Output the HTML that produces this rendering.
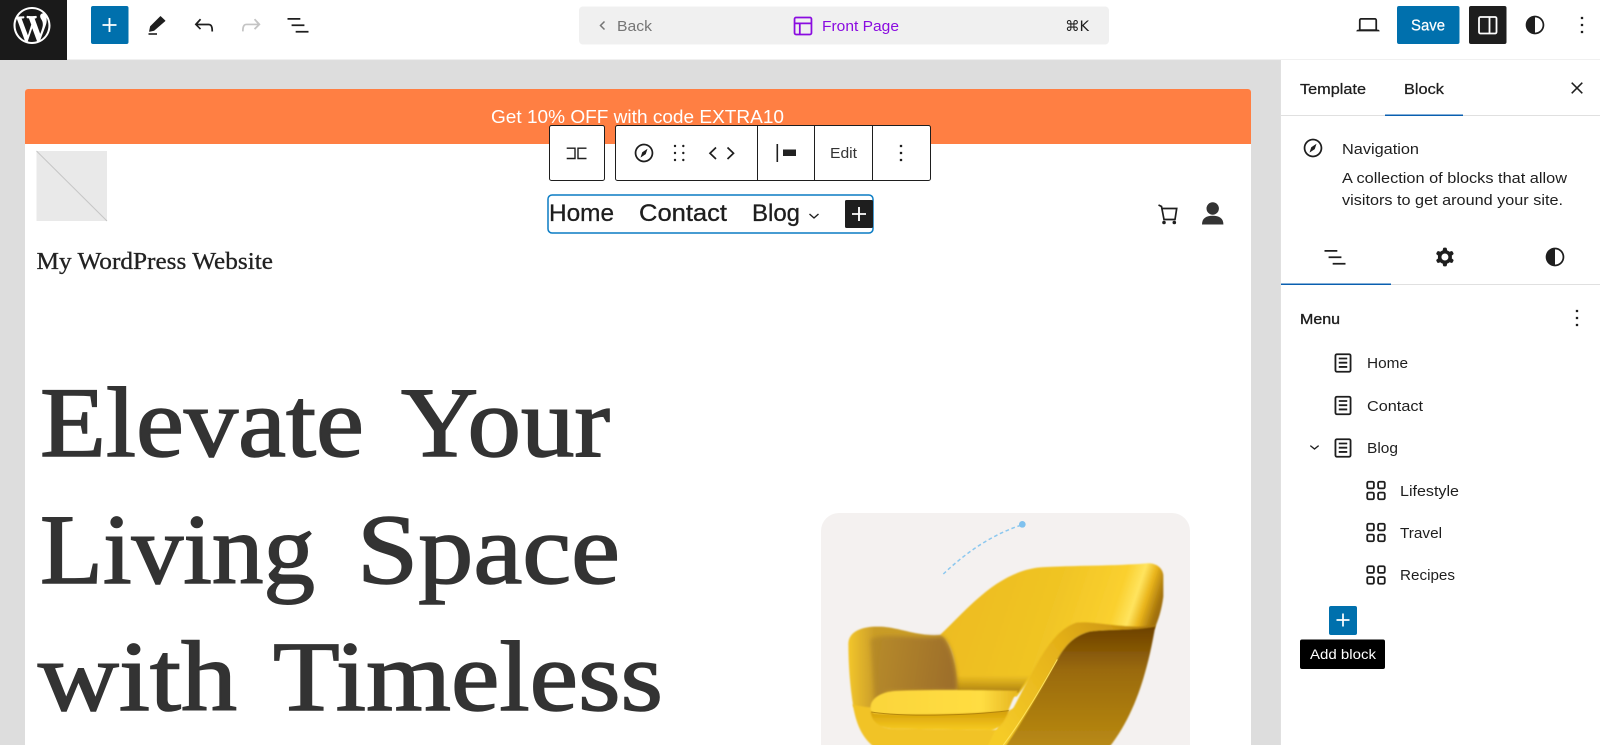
<!DOCTYPE html>
<html lang="en">
<head>
<meta charset="utf-8">
<title>Front Page</title>
<style>
html,body{margin:0;padding:0;background:#fff;width:1600px;height:745px;overflow:hidden}
svg{display:block;position:absolute;left:0;top:0}
text{font-family:"Liberation Sans",Arial,sans-serif;fill:#1e1e1e}
.ui{font-size:14.5px}
.m{stroke:#1e1e1e;stroke-width:.25px}
.serif{font-family:"Liberation Serif",serif;fill:#333}
.h{font-size:100px;stroke:#333;stroke-width:1.5px}
.d{stroke:#1e1e1e;stroke-width:.25px}
</style>
</head>
<body>
<svg width="1600" height="745" viewBox="0 0 1600 745" xmlns="http://www.w3.org/2000/svg">
<defs>
<symbol id="plus" viewBox="0 0 24 24"><path d="M18 11.2h-5.2V6h-1.6v5.2H6v1.6h5.2V18h1.6v-5.2H18z"/></symbol>
<symbol id="undo" viewBox="0 0 24 24"><path d="M18.3 11.7c-.6-.6-1.4-.9-2.3-.9H6.7l2.9-3.3-1.1-1-4.5 5L8.5 16l1-1-2.7-2.7H16c.5 0 .9.2 1.3.5 1 1 1 3.4 1 4.5v.3h1.5v-.2c0-1.5 0-4.3-1.5-5.7z"/></symbol>
<symbol id="redo" viewBox="0 0 24 24"><path d="M15.6 6.5l-1.1 1 2.9 3.3H8c-.9 0-1.7.3-2.3.9-1.4 1.5-1.4 4.2-1.4 5.6v.2h1.5v-.3c0-1.1 0-3.5 1-4.5.3-.3.7-.5 1.3-.5h9.2L14.5 15l1.1 1.1 4.6-4.6-4.6-5z"/></symbol>
<symbol id="list" viewBox="0 0 24 24"><path d="M3 6h11v1.5H3V6Zm3.5 5.5h11V13h-11v-1.5ZM21 17H10v1.5h11V17Z"/></symbol>
<symbol id="laptop" viewBox="0 0 24 24"><path d="M20.5 16h-.7V8c0-1.1-.9-2-2-2H6.2c-1.1 0-2 .9-2 2v8h-.7c-.8 0-1.5.7-1.5 1.5h20c0-.8-.7-1.5-1.5-1.5zM5.7 8c0-.3.2-.5.5-.5h11.6c.3 0 .5.2.5.5v7.6H5.7V8z" fill-rule="evenodd"/></symbol>
<symbol id="half" viewBox="0 0 24 24"><path fill-rule="evenodd" d="M12 4c-4.4 0-8 3.6-8 8s3.6 8 8 8 8-3.6 8-8-3.6-8-8-8zm0 14.5V5.5c3.6 0 6.5 2.9 6.5 6.5s-2.9 6.5-6.5 6.5z"/></symbol>
<symbol id="kebab" viewBox="0 0 24 24"><path d="M13 19h-2v-2h2v2zm0-6h-2v-2h2v2zm0-6h-2V5h2v2z"/></symbol>
<symbol id="compass" viewBox="0 0 24 24"><path d="M12 4c-4.4 0-8 3.6-8 8s3.6 8 8 8 8-3.6 8-8-3.6-8-8-8zm0 14.5c-3.6 0-6.5-2.9-6.5-6.5S8.4 5.5 12 5.5s6.5 2.9 6.5 6.5-2.9 6.5-6.5 6.5zM9 16l4.5-3L15 8.4l-4.5 3L9 16z"/></symbol>
<symbol id="cog" viewBox="0 0 24 24"><path fill-rule="evenodd" d="M10.289 4.836A1 1 0 0 1 11.275 4h1.306a1 1 0 0 1 .987.836l.244 1.466c.787.26 1.503.679 2.108 1.218l1.393-.522a1 1 0 0 1 1.216.437l.653 1.13a1 1 0 0 1-.23 1.273l-1.148.944a6.025 6.025 0 0 1 0 2.435l1.149.946a1 1 0 0 1 .23 1.272l-.653 1.13a1 1 0 0 1-1.216.437l-1.394-.522c-.605.54-1.32.958-2.108 1.218l-.244 1.466a1 1 0 0 1-.987.836h-1.306a1 1 0 0 1-.986-.836l-.244-1.466a5.995 5.995 0 0 1-2.108-1.218l-1.394.522a1 1 0 0 1-1.217-.436l-.653-1.131a1 1 0 0 1 .23-1.272l1.149-.946a6.026 6.026 0 0 1 0-2.435l-1.148-.944a1 1 0 0 1-.23-1.272l.653-1.131a1 1 0 0 1 1.217-.437l1.393.522a5.994 5.994 0 0 1 2.108-1.218l.244-1.466ZM14.929 12a3 3 0 1 1-6 0 3 3 0 0 1 6 0Z"/></symbol>
<symbol id="page" viewBox="0 0 24 24"><path d="M15.5 7.5h-7V9h7V7.5Zm-7 3.5h7v1.5h-7V11Zm7 3.5h-7V16h7v-1.5Z"/><path fill-rule="evenodd" d="M17 4H7a2 2 0 0 0-2 2v12a2 2 0 0 0 2 2h10a2 2 0 0 0 2-2V6a2 2 0 0 0-2-2ZM7 5.5h10a.5.5 0 0 1 .5.5v12a.5.5 0 0 1-.5.5H7a.5.5 0 0 1-.5-.5V6a.5.5 0 0 1 .5-.5Z"/></symbol>
<symbol id="grid" viewBox="0 0 24 24"><path fill-rule="evenodd" d="M6 5.5h3a.5.5 0 01.5.5v3a.5.5 0 01-.5.5H6a.5.5 0 01-.5-.5V6a.5.5 0 01.5-.5zM4 6a2 2 0 012-2h3a2 2 0 012 2v3a2 2 0 01-2 2H6a2 2 0 01-2-2V6zm11-.5h3a.5.5 0 01.5.5v3a.5.5 0 01-.5.5h-3a.5.5 0 01-.5-.5V6a.5.5 0 01.5-.5zM13 6a2 2 0 012-2h3a2 2 0 012 2v3a2 2 0 01-2 2h-3a2 2 0 01-2-2V6zm5 8.5h-3a.5.5 0 00-.5.5v3a.5.5 0 00.5.5h3a.5.5 0 00.5-.5v-3a.5.5 0 00-.5-.5zM15 13a2 2 0 00-2 2v3a2 2 0 002 2h3a2 2 0 002-2v-3a2 2 0 00-2-2h-3zm-9 1.5h3a.5.5 0 01.5.5v3a.5.5 0 01-.5.5H6a.5.5 0 01-.5-.5v-3a.5.5 0 01.5-.5zM4 15a2 2 0 012-2h3a2 2 0 012 2v3a2 2 0 01-2 2H6a2 2 0 01-2-2v-3z"/></symbol>
<symbol id="layout" viewBox="0 0 24 24"><path fill-rule="evenodd" d="M18 5.5H6a.5.5 0 00-.5.5v3h13V6a.5.5 0 00-.5-.5zm.5 5H10v8h8a.5.5 0 00.5-.5v-7.5zm-10 0h-3V18a.5.5 0 00.5.5h2.5v-8zM6 4h12a2 2 0 012 2v12a2 2 0 01-2 2H6a2 2 0 01-2-2V6a2 2 0 012-2z"/></symbol>
<symbol id="chev" viewBox="0 0 24 24"><path d="M17.5 11.6L12 16l-5.5-4.4.9-1.2L12 14l4.5-3.6 1 1.2z"/></symbol>
<linearGradient id="gBack" gradientUnits="userSpaceOnUse" x1="420" y1="200" x2="1090" y2="423">
<stop offset="0" stop-color="#ecba1f"/><stop offset=".5" stop-color="#f0c424"/><stop offset=".76" stop-color="#fad02f"/><stop offset=".83" stop-color="#ffe45e"/><stop offset=".875" stop-color="#eab51c"/><stop offset=".93" stop-color="#a5740c"/><stop offset="1" stop-color="#8a5a08"/>
</linearGradient>
<linearGradient id="gShade" gradientUnits="userSpaceOnUse" x1="0" y1="525" x2="0" y2="578">
<stop offset="0" stop-color="#b88a10" stop-opacity="0"/><stop offset="1" stop-color="#a87c0e"/>
</linearGradient>
<linearGradient id="gArm" gradientUnits="userSpaceOnUse" x1="145" y1="0" x2="225" y2="0">
<stop offset="0" stop-color="#f3c62a"/><stop offset="1" stop-color="#c99c28"/>
</linearGradient>
<linearGradient id="gInner" gradientUnits="userSpaceOnUse" x1="200" y1="480" x2="470" y2="520">
<stop offset="0" stop-color="#b88c28"/><stop offset="1" stop-color="#9c6d2c"/>
</linearGradient>
<linearGradient id="gSeatT" gradientUnits="userSpaceOnUse" x1="212" y1="600" x2="655" y2="600">
<stop offset="0" stop-color="#fbd53a"/><stop offset=".75" stop-color="#ffdd42"/><stop offset="1" stop-color="#e5b41f"/>
</linearGradient>
<linearGradient id="gSeatB" gradientUnits="userSpaceOnUse" x1="0" y1="635" x2="0" y2="690">
<stop offset="0" stop-color="#d6a00a"/><stop offset="1" stop-color="#f6ca20"/>
</linearGradient>
<linearGradient id="gShell" gradientUnits="userSpaceOnUse" x1="900" y1="385" x2="900" y2="745">
<stop offset="0" stop-color="#6e4204"/><stop offset=".35" stop-color="#9a6a08"/><stop offset="1" stop-color="#b98a14"/>
</linearGradient>
<linearGradient id="gBand" gradientUnits="userSpaceOnUse" x1="600" y1="700" x2="1060" y2="370">
<stop offset="0" stop-color="#f5cb28"/><stop offset=".55" stop-color="#e3af18"/><stop offset=".8" stop-color="#d29c12"/><stop offset="1" stop-color="#a87508"/>
</linearGradient>
<filter id="soft" x="-5%" y="-5%" width="110%" height="110%"><feGaussianBlur stdDeviation="2.4"/></filter>
<filter id="softer" x="-15%" y="-15%" width="130%" height="130%"><feGaussianBlur stdDeviation="6"/></filter>
</defs>

<!-- Canvas area -->
<rect x="0" y="60" width="1280" height="685" fill="#dddddd"/>
<path d="M25 92a3 3 0 0 1 3-3H1248a3 3 0 0 1 3 3V745H25Z" fill="#fff"/>
<path d="M25 92a3 3 0 0 1 3-3H1248a3 3 0 0 1 3 3V144H25Z" fill="#ff7f43"/>
<text x="491" y="123" font-size="18.5" style="fill:#fff" textLength="293" lengthAdjust="spacingAndGlyphs">Get 10% OFF with code EXTRA10</text>

<!-- Logo placeholder and title -->
<rect x="36.5" y="151" width="70.5" height="70" fill="#e9e9e9"/>
<line x1="36.5" y1="151" x2="107" y2="221" stroke="#c6c6c6" stroke-width="1"/>
<text class="serif" x="36.5" y="269" font-size="24" style="fill:#222;stroke:#222;stroke-width:.3px" textLength="236.5" lengthAdjust="spacingAndGlyphs">My WordPress Website</text>

<!-- Heading -->
<text class="serif h" x="40" y="456" textLength="324" lengthAdjust="spacingAndGlyphs">Elevate</text>
<text class="serif h" x="401" y="456" textLength="209" lengthAdjust="spacingAndGlyphs">Your</text>
<text class="serif h" x="40" y="583" textLength="275" lengthAdjust="spacingAndGlyphs">Living</text>
<text class="serif h" x="357" y="583" textLength="263" lengthAdjust="spacingAndGlyphs">Space</text>
<text class="serif h" x="38" y="710" textLength="199" lengthAdjust="spacingAndGlyphs">with</text>
<text class="serif h" x="273" y="710" textLength="390" lengthAdjust="spacingAndGlyphs">Timeless</text>

<!-- Hero card -->
<path d="M821 745V531a18 18 0 0 1 18-18H1172a18 18 0 0 1 18 18V745Z" fill="#f4f1f0"/>
<g transform="translate(800 500) scale(.33333)">
<path d="M430 222C490 165 570 105 665 75" fill="none" stroke="#8cc8ef" stroke-width="4.5" stroke-dasharray="11 8"/>
<circle cx="667" cy="73" r="10" fill="#7fc1ee"/>
<g filter="url(#soft)">
<path d="M420 405C500 330 590 215 720 202C820 196 950 198 1040 190C1070 188 1088 205 1090 225L1090 290C1085 330 1075 360 1063 388L800 400L650 590L470 575C470 500 460 430 420 405Z" fill="url(#gBack)"/>
<path d="M470 525L690 525L655 578L470 578Z" fill="url(#gShade)"/>
<path d="M145 432C145 395 185 378 240 380C300 382 350 410 420 405C452 420 472 500 472 575L300 600L212 640L160 620C150 560 145 490 145 432Z" fill="url(#gArm)"/>
</g>
<path d="M212 418C245 395 340 418 428 410C452 435 470 500 472 572L262 574L225 605Z" fill="url(#gInner)" filter="url(#softer)"/>
<g filter="url(#soft)">
<path d="M158 612C168 670 185 715 228 745L625 745L725 590L630 630L590 690L270 686C235 680 212 660 212 622C190 620 170 618 158 612Z" fill="#f1c325"/>
<path d="M212 632C212 665 240 685 280 686L570 690C595 690 610 670 628 630Z" fill="url(#gSeatB)"/>
<path d="M212 628C208 600 235 578 285 573C380 568 560 570 655 572C640 590 632 615 625 632C500 644 300 646 225 640C216 638 212 634 212 628Z" fill="url(#gSeatT)"/>
</g>
<path d="M214 636C300 650 500 648 626 632" fill="none" stroke="#a87a08" stroke-width="3" opacity=".8"/>
<g filter="url(#soft)">
<path d="M612 745C670 660 720 570 772 478C795 435 825 405 870 394C940 386 1010 392 1066 378C1045 500 1010 640 925 745Z" fill="url(#gShell)"/>
<path d="M585 692C625 670 655 590 700 510C740 440 775 385 830 368C890 362 990 392 1066 374L1066 380C1000 392 940 386 870 394C825 405 795 435 772 478C720 570 670 660 612 745L560 745Z" fill="url(#gBand)"/>
</g>
<path d="M610 735C670 655 720 570 772 478" fill="none" stroke="#ffe25a" stroke-width="3"/>
</g>

<!-- Nav block -->
<rect x="548" y="195" width="325" height="38" rx="4" fill="#fff" stroke="#0a7cc4" stroke-width="1.5"/>
<text x="549" y="221" font-size="24" class="d" style="stroke-width:.3px" textLength="65" lengthAdjust="spacingAndGlyphs">Home</text>
<text x="639" y="221" font-size="24" class="d" style="stroke-width:.3px" textLength="88" lengthAdjust="spacingAndGlyphs">Contact</text>
<text x="752" y="221" font-size="24" class="d" style="stroke-width:.3px" textLength="48" lengthAdjust="spacingAndGlyphs">Blog</text>
<path d="M809.5 214l4.5 4 4.5-4" fill="none" stroke="#1e1e1e" stroke-width="1.4"/>
<rect x="845" y="200" width="28" height="28" rx="1.5" fill="#1e1e1e"/>
<use href="#plus" x="845" y="200" width="28" height="28" fill="#fff"/>

<!-- Cart and user -->
<path d="M1158.5 205L1161.5 206.5L1164 219.5H1175L1176.7 208.5H1162" fill="none" stroke="#1e1e1e" stroke-width="1.7"/>
<circle cx="1164" cy="222.5" r="1.8" fill="#1e1e1e"/><circle cx="1174.3" cy="222.5" r="1.8" fill="#1e1e1e"/>
<circle cx="1212.7" cy="208.5" r="6.2" fill="#333"/>
<path d="M1202 224.5C1202 218.5 1206 215.8 1212.7 215.8S1223.4 218.5 1223.4 224.5Z" fill="#333"/>

<!-- Block toolbar -->
<rect x="549.5" y="125.5" width="55" height="55" rx="2" fill="#fff" stroke="#1e1e1e" stroke-width="1"/>
<path d="M566.7 148.2H575V158.5H566.7M586.5 148.2H578V158.5H586.5" fill="none" stroke="#1e1e1e" stroke-width="1.4"/>
<rect x="615.5" y="125.5" width="315" height="55" rx="2" fill="#fff" stroke="#1e1e1e" stroke-width="1"/>
<path d="M757.5 125.5V180.5M814.5 125.5V180.5M872.5 125.5V180.5" stroke="#1e1e1e" stroke-width="1"/>
<use href="#compass" x="630" y="139" width="28" height="28" fill="#1e1e1e"/>
<g fill="#1e1e1e"><circle cx="675" cy="146" r="1.2"/><circle cx="683.3" cy="146" r="1.2"/><circle cx="675" cy="153" r="1.2"/><circle cx="683.3" cy="153" r="1.2"/><circle cx="675" cy="160" r="1.2"/><circle cx="683.3" cy="160" r="1.2"/></g>
<path d="M716 147.500L710 153.300L716 159M727.500 147.500L733.500 153.300L727.500 159" fill="none" stroke="#1e1e1e" stroke-width="1.7"/>
<path d="M777.3 144V162" stroke="#1e1e1e" stroke-width="1.6"/>
<rect x="783" y="149.5" width="13" height="6.5" fill="#222"/>
<text x="830" y="158" font-size="14.5" style="fill:#333" textLength="27" lengthAdjust="spacingAndGlyphs">Edit</text>
<use href="#kebab" x="887" y="139" width="28" height="28" fill="#1e1e1e"/>

<!-- Top bar -->
<rect x="0" y="0" width="1600" height="60" fill="#fff"/>
<rect x="0" y="0" width="67" height="60" fill="#1a1a1a"/>
<g transform="translate(13.5 7) scale(1.85)"><path fill="#fff" d="M20 10c0-5.51-4.49-10-10-10C4.48 0 0 4.49 0 10c0 5.52 4.48 10 10 10 5.51 0 10-4.48 10-10zM7.78 15.37L4.37 6.22c.55-.02 1.17-.08 1.17-.08.5-.06.44-1.13-.06-1.11 0 0-1.45.11-2.37.11-.18 0-.37 0-.58-.01C4.12 2.69 6.87 1.11 10 1.11c2.33 0 4.45.87 6.05 2.34-.68-.11-1.65.39-1.65 1.58 0 .74.45 1.36.9 2.1.35.61.55 1.36.55 2.46 0 1.49-1.4 5-1.4 5l-3.03-8.37c.54-.02.82-.17.82-.17.5-.05.44-1.25-.06-1.22 0 0-1.44.12-2.38.12-.87 0-2.33-.12-2.33-.12-.5-.03-.56 1.2-.06 1.22l.92.08 1.26 3.41zM17.41 10c.24-.64.74-1.87.43-4.25.7 1.29 1.05 2.71 1.05 4.25 0 3.29-1.73 6.24-4.4 7.78.97-2.59 1.94-5.2 2.92-7.78zM6.1 18.09C3.12 16.65 1.11 13.53 1.11 10c0-1.3.23-2.48.72-3.59C3.25 10.3 4.67 14.2 6.1 18.09zm4.03-6.63l2.58 6.98c-.86.29-1.76.45-2.71.45-.79 0-1.57-.11-2.29-.33.81-2.38 1.62-4.74 2.42-7.1z"/></g>
<rect x="91" y="6" width="37.5" height="38" rx="2" fill="#0070ad"/>
<use href="#plus" x="95.5" y="11" width="28" height="28" fill="#fff"/>
<path d="M160.5 16.5L165 20.8L154 30.3L149.5 31.3L150.5 26.5Z" fill="#1e1e1e" stroke="#1e1e1e" stroke-width=".8" stroke-linejoin="round"/>
<path d="M148.5 34H157" stroke="#1e1e1e" stroke-width="1.6"/>
<use href="#undo" x="190" y="11" width="28" height="28" fill="#1e1e1e"/>
<use href="#redo" x="237" y="11" width="28" height="28" fill="#c4c4c4"/>
<use href="#list" x="284" y="11" width="28" height="28" fill="#1e1e1e"/>

<rect x="579" y="6.5" width="530" height="38" rx="4" fill="#f0f0f0"/>
<path d="M604.5 21.5L600.5 25.5L604.5 29.5" fill="none" stroke="#757575" stroke-width="1.5"/>
<text class="ui" x="617" y="31" style="fill:#757575" textLength="35" lengthAdjust="spacingAndGlyphs">Back</text>
<use href="#layout" x="789" y="12" width="28" height="28" fill="#8a0be0"/>
<text class="ui" x="822" y="31" style="fill:#8a0be0" textLength="77" lengthAdjust="spacingAndGlyphs">Front Page</text>
<text x="1065" y="31" font-size="14.5" style="font-family:'DejaVu Sans','Liberation Sans',sans-serif" textLength="24" lengthAdjust="spacingAndGlyphs">⌘K</text>

<use href="#laptop" x="1354" y="11" width="28" height="28" fill="#1e1e1e"/>
<rect x="1397" y="6" width="62.5" height="38" rx="2" fill="#0070ad"/>
<text x="1411" y="30.5" font-size="15.5" style="fill:#fff;stroke:#fff;stroke-width:.2px" textLength="34" lengthAdjust="spacingAndGlyphs">Save</text>
<rect x="1469" y="6" width="37.5" height="38" rx="2" fill="#1e1e1e"/>
<rect x="1479" y="17" width="17.5" height="16.5" rx="1.5" fill="none" stroke="#fff" stroke-width="1.8"/>
<path d="M1489.5 17V33.5" stroke="#fff" stroke-width="1.8"/>
<use href="#half" x="1521" y="11" width="28" height="28" fill="#1e1e1e"/>
<use href="#kebab" x="1568" y="11" width="28" height="28" fill="#1e1e1e"/>
<rect x="67" y="59.5" width="1533" height="1" fill="#e0e0e0"/>

<!-- Sidebar -->
<rect x="1280" y="60" width="320" height="685" fill="#fff"/>
<rect x="1280" y="60" width="1" height="685" fill="#e0e0e0"/>
<rect x="1281" y="115" width="319" height="1" fill="#e0e0e0"/>
<rect x="1385" y="114.5" width="78" height="1.5" fill="#0a5fb0"/>
<text class="ui m" x="1300" y="94" textLength="66" lengthAdjust="spacingAndGlyphs">Template</text>
<text class="ui m" x="1404" y="94" textLength="40" lengthAdjust="spacingAndGlyphs">Block</text>
<path d="M1571.7 82.7L1582.3 93.3M1582.3 82.7L1571.7 93.3" stroke="#1e1e1e" stroke-width="1.5" fill="none"/>

<use href="#compass" x="1299" y="134" width="28" height="28" fill="#1e1e1e"/>
<text class="ui" x="1342" y="154" textLength="77" lengthAdjust="spacingAndGlyphs">Navigation</text>
<text class="ui" x="1342" y="183" textLength="225" lengthAdjust="spacingAndGlyphs">A collection of blocks that allow</text>
<text class="ui" x="1342" y="205" textLength="221" lengthAdjust="spacingAndGlyphs">visitors to get around your site.</text>

<use href="#list" x="1321" y="243" width="28" height="28" fill="#1e1e1e"/>
<use href="#cog" x="1431" y="243" width="28" height="28" fill="#1e1e1e"/>
<use href="#half" x="1541" y="243" width="28" height="28" fill="#1e1e1e"/>
<rect x="1281" y="284" width="319" height="1" fill="#e0e0e0"/>
<rect x="1281" y="283.5" width="110" height="1.5" fill="#0a5fb0"/>

<text class="ui m" x="1300" y="324" textLength="40" lengthAdjust="spacingAndGlyphs" style="stroke-width:.35px">Menu</text>
<use href="#kebab" x="1563" y="304" width="28" height="28" fill="#1e1e1e"/>

<use href="#page" x="1328.5" y="348.5" width="29" height="29" fill="#1e1e1e"/>
<text class="ui" x="1367" y="368" textLength="41" lengthAdjust="spacingAndGlyphs">Home</text>
<use href="#page" x="1328.5" y="391" width="29" height="29" fill="#1e1e1e"/>
<text class="ui" x="1367" y="411" textLength="56" lengthAdjust="spacingAndGlyphs">Contact</text>
<use href="#page" x="1328.5" y="433.5" width="29" height="29" fill="#1e1e1e"/>
<text class="ui" x="1367" y="453" textLength="31" lengthAdjust="spacingAndGlyphs">Blog</text>
<use href="#chev" x="1304.5" y="436.5" width="20" height="20" fill="#1e1e1e"/>

<use href="#grid" x="1361.5" y="476" width="29" height="29" fill="#1e1e1e"/>
<text class="ui" x="1400" y="496" textLength="59" lengthAdjust="spacingAndGlyphs">Lifestyle</text>
<use href="#grid" x="1361.5" y="518" width="29" height="29" fill="#1e1e1e"/>
<text class="ui" x="1400" y="538" textLength="42" lengthAdjust="spacingAndGlyphs">Travel</text>
<use href="#grid" x="1361.5" y="560.5" width="29" height="29" fill="#1e1e1e"/>
<text class="ui" x="1400" y="580" textLength="55" lengthAdjust="spacingAndGlyphs">Recipes</text>

<rect x="1329" y="606" width="28" height="29" rx="2" fill="#0070ad"/>
<use href="#plus" x="1330" y="607" width="26" height="26" fill="#fff"/>
<rect x="1300" y="639.5" width="85" height="29.5" rx="2" fill="#000"/>
<text x="1310" y="659" font-size="14" style="fill:#fff" textLength="66" lengthAdjust="spacingAndGlyphs">Add block</text>
</svg>
</body>
</html>
